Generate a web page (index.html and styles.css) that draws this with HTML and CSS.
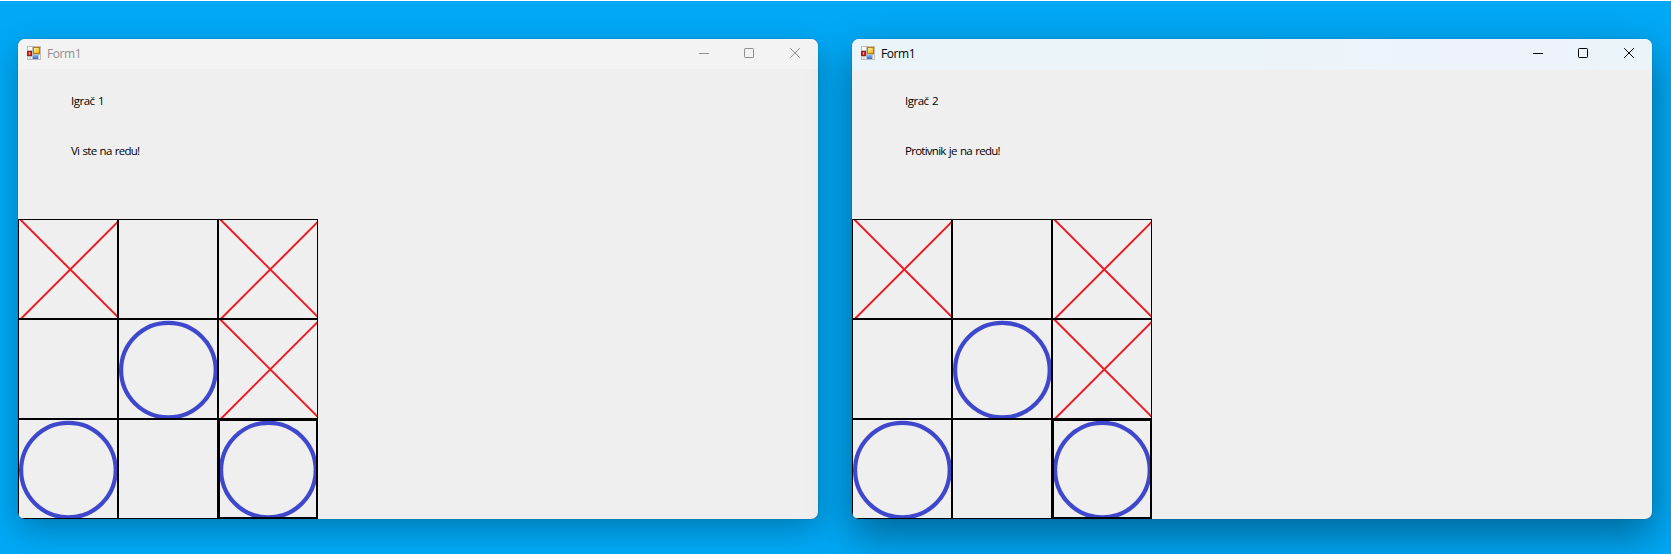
FILE: index.html
```
<!DOCTYPE html>
<html lang="hr">
<head>
<meta charset="utf-8">
<title>Form1</title>
<link rel="stylesheet" href="styles.css">
</head>
<body>
<svg width="0" height="0" class="defs">
  <defs>
    <linearGradient id="gold" x2="1" y2="1"><stop stop-color="#fff0a0"/><stop offset="1" stop-color="#f3b200"/></linearGradient>
    <linearGradient id="blue" x2="0" y2="1"><stop stop-color="#83b5ff"/><stop offset="1" stop-color="#2f69d8"/></linearGradient>
    <symbol id="app" viewBox="0 0 14 14">
      <path fill="#bdbdbd" d="M0 0h14v14H0z"/>
      <path fill="#f8f8f8" d="M1 1h4v3H1zM1 11h1.500v2H1zM3.500 11H5v2H3.500zM12 9h1v4h-1z"/>
      <path fill="#9d1717" d="M0 5h5v5H0z"/><path fill="#d83425" d="M1 6h3v3H1z"/><path fill="#ffc0b0" d="M2 6.500h1v2H2z"/>
      <path fill="#b27d13" d="M6 1h7v7H6z"/><path fill="url(#gold)" d="M7 2h5v5H7z"/>
      <path fill="url(#blue)" d="M6 9h5v4H6z"/>
    </symbol>
    <symbol id="x" viewBox="0 0 100 100"><path d="M2 .2L100 98.200M2.500 100.200L100 2.700" fill="none" stroke="#ed1c24" stroke-width="2"/></symbol>
    <symbol id="o" viewBox="0 0 100 100"><circle cx="50.400" cy="51.100" r="47.300" fill="none" stroke="#3f48cc" stroke-width="4.200"/></symbol>
  </defs>
</svg>
<main class="desktop">
  <section class="window inactive">
    <header class="titlebar">
      <svg class="app-icon"><use href="#app"/></svg><span class="title">Form1</span>
      <div class="controls">
        <svg viewBox="0 0 10 10"><path d="M0 5.500h10"/></svg>
        <svg viewBox="0 0 10 10"><rect x=".5" y=".5" width="9" height="9" rx=".8"/></svg>
        <svg viewBox="0 0 10 10"><path d="M.2.2l9.600 9.600M9.800.2L.2 9.800"/></svg>
      </div>
    </header>
    <div class="labels"><p class="player">Igrač 1</p><p class="turn">Vi ste na redu!</p></div>
    <div class="board">
      <div class="cell"><svg><use href="#x"/></svg></div><div class="cell"></div><div class="cell"><svg><use href="#x"/></svg></div>
      <div class="cell"></div><div class="cell"><svg><use href="#o"/></svg></div><div class="cell"><svg><use href="#x"/></svg></div>
      <div class="cell"><svg><use href="#o"/></svg></div><div class="cell"></div><div class="cell focused"><svg><use href="#o"/></svg></div>
    </div>
  </section>
  <section class="window active">
    <header class="titlebar">
      <svg class="app-icon"><use href="#app"/></svg><span class="title">Form1</span>
      <div class="controls">
        <svg viewBox="0 0 10 10"><path d="M0 5.500h10"/></svg>
        <svg viewBox="0 0 10 10"><rect x=".5" y=".5" width="9" height="9" rx=".8"/></svg>
        <svg viewBox="0 0 10 10"><path d="M.2.2l9.600 9.600M9.800.2L.2 9.800"/></svg>
      </div>
    </header>
    <div class="labels"><p class="player">Igrač 2</p><p class="turn">Protivnik je na redu!</p></div>
    <div class="board">
      <div class="cell"><svg><use href="#x"/></svg></div><div class="cell"></div><div class="cell"><svg><use href="#x"/></svg></div>
      <div class="cell"></div><div class="cell"><svg><use href="#o"/></svg></div><div class="cell"><svg><use href="#x"/></svg></div>
      <div class="cell"><svg><use href="#o"/></svg></div><div class="cell"></div><div class="cell focused"><svg><use href="#o"/></svg></div>
    </div>
  </section>
</main>
</body>
</html>
```

FILE: styles.css
```
* { box-sizing: border-box; }
html { background: #fff; }
body { height: 555px; margin: 0; padding: 1px 0; font-family: "Open Sans", "Noto Sans", sans-serif; overflow: hidden; }
.defs { display: block; }
.desktop {
  height: 553px;
  padding: 38px 0 0 18px;
  display: flex;
  gap: 34px;
  overflow: hidden;
  background: #00a8f5;
}
.window {
  flex: none;
  width: 800px;
  height: 480px;
  border-radius: 7px;
  background: #efefef;
  overflow: hidden;
}
.inactive { box-shadow: 0 0 1px rgba(0,0,0,.5), 0 10px 30px rgba(0,0,0,.27); }
.active { box-shadow: 0 0 1px rgba(0,0,0,.5), 0 16px 42px rgba(0,0,0,.4); }
.titlebar { display: flex; height: 30px; padding-left: 9px; background: #f3f3f3; color: #8f8f8f; }
.active .titlebar { background: linear-gradient(90deg, #ebf4f8 0 50%, #eef3fb 75%, #eef3fb 88%, #ebf4f8 94%); color: #000; }
.app-icon { width: 14px; height: 14px; margin-top: 7px; }
.title { margin-left: 6px; font-size: 12px; line-height: 30px; letter-spacing: -.4px; }
.controls { display: flex; gap: 35px; margin: 9px 18px 0 auto; }
.controls svg { width: 10px; height: 10px; fill: none; stroke: currentColor; stroke-width: 1; overflow: visible; }
.controls svg:last-child { margin-left: 1px; }
.labels { height: 150px; padding: 24px 0 0 53px; color: #000; }
.labels p { margin: 0 0 34px; font-size: 11.5px; line-height: 16px; white-space: nowrap; }
.player { letter-spacing: -.5px; word-spacing: 1px; }
.turn { letter-spacing: -.74px; word-spacing: 1px; }
.board { display: grid; grid-template-columns: repeat(3, 100px); grid-auto-rows: 100px; }
.cell { border: 1px solid #000; overflow: hidden; }
.cell svg { display: block; width: 100px; height: 100px; margin: -1px 0 0 -1px; }
.focused { border-width: 2px; }
.focused svg { margin: -2px 0 0 -2px; }
```
